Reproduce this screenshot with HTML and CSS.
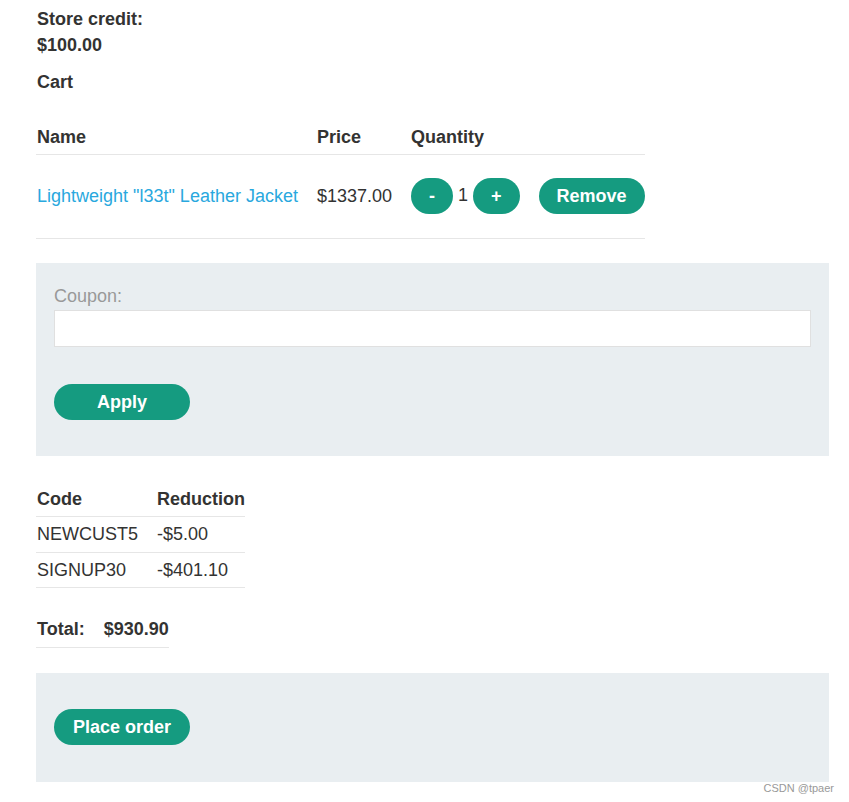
FILE: index.html
```html
<!DOCTYPE html>
<html lang="en">
<head>
  <meta charset="UTF-8">
  <meta name="viewport" content="width=device-width, initial-scale=1.0">
  <title>Cart</title>
  <link rel="stylesheet" href="styles.css">
</head>
<body>
  <div class="container">
    <!-- store credit -->
    <p class="credit"><strong>Store credit:<br>$100.00</strong></p>
    <p class="cart-title"><strong>Cart</strong></p>

    <!-- cart items -->
    <table class="cart-table">
      <thead>
        <tr>
          <th>Name</th>
          <th>Price</th>
          <th>Quantity</th>
          <th></th>
        </tr>
      </thead>
      <tbody>
        <tr>
          <td><a href="#" class="product-link">Lightweight "l33t" Leather Jacket</a></td>
          <td>$1337.00</td>
          <td><button class="button">-</button> 1 <button class="button">+</button></td>
          <td><button class="button">Remove</button></td>
        </tr>
      </tbody>
    </table>

    <!-- coupon form -->
    <form class="panel coupon-form" onsubmit="return false">
      <label for="coupon">Coupon:</label>
      <input type="text" id="coupon" name="coupon">
      <button class="button wide">Apply</button>
    </form>

    <!-- applied coupons -->
    <table class="small-table">
      <tr>
        <th>Code</th>
        <th>Reduction</th>
      </tr>
      <tr>
        <td>NEWCUST5</td>
        <td>-$5.00</td>
      </tr>
      <tr>
        <td>SIGNUP30</td>
        <td>-$401.10</td>
      </tr>
    </table>

    <table class="small-table total-table">
      <tr>
        <th>Total:</th>
        <th>$930.90</th>
      </tr>
    </table>

    <!-- checkout -->
    <form class="panel order-form" onsubmit="return false">
      <button class="button wide">Place order</button>
    </form>
  </div>

  <div class="watermark">CSDN @tpaer</div>
</body>
</html>
```

FILE: styles.css
```css
/* Global Styles */
* {
  box-sizing: border-box;
  font-family: "Liberation Sans", Arial, sans-serif;
}

body {
  margin: 0;
  padding: 0;
  background-color: #fff;
  color: #333332;
  font-size: 18px;
  line-height: 26px;
}

.container {
  padding: 6px 20px 21px 37px;
}

p {
  margin: 0;
}

.cart-title {
  margin-top: 11px;
}

/* Tables */
table {
  border-collapse: collapse;
}

th, td {
  text-align: left;
  padding: 4px 19px 4px 0;
  border-bottom: 1px solid #e6e6e6;
}

th:last-child, td:last-child {
  padding-right: 0;
}

.cart-table {
  margin-top: 25px;
  margin-left: -1px;
}

.cart-table th:first-child,
.cart-table td:first-child {
  padding-left: 1px;
}

.cart-table td {
  padding-top: 23px;
  padding-bottom: 24px;
  vertical-align: middle;
}

.product-link {
  color: #29a8de;
  text-decoration: none;
}

/* Buttons */
.button {
  display: inline-block;
  height: 36px;
  padding: 0 18px;
  border: none;
  border-radius: 18px;
  background-color: #159b80;
  color: #fff;
  font-size: 18px;
  font-weight: bold;
  line-height: 36px;
  vertical-align: middle;
  cursor: pointer;
}

.button.wide {
  min-width: 136px;
}

/* Gray panels */
.panel {
  background-color: #e9eef1;
  margin-left: -1px;
  padding: 20px 18px 36px 18px;
}

.coupon-form {
  margin-top: 24px;
}

.coupon-form label {
  display: block;
  color: #999;
}

.coupon-form input {
  display: block;
  width: 100%;
  height: 37px;
  margin: 1px 0 37px 0;
  border: 1px solid #e0e0e0;
  background: #fff;
  font-size: 18px;
}

.small-table {
  margin-top: 26px;
  margin-left: -1px;
}

.small-table th:first-child,
.small-table td:first-child {
  padding-left: 1px;
}

.small-table td {
  padding-bottom: 4.5px;
}

.total-table {
  margin-top: 24px;
}

.total-table th {
  padding-bottom: 5px;
}

.order-form {
  margin-top: 25px;
  padding-top: 36px;
  padding-bottom: 37px;
}

/* watermark in the corner */
.watermark {
  position: absolute;
  top: 781px;
  right: 15px;
  font-size: 11px;
  line-height: 14px;
  color: #999;
}
```
